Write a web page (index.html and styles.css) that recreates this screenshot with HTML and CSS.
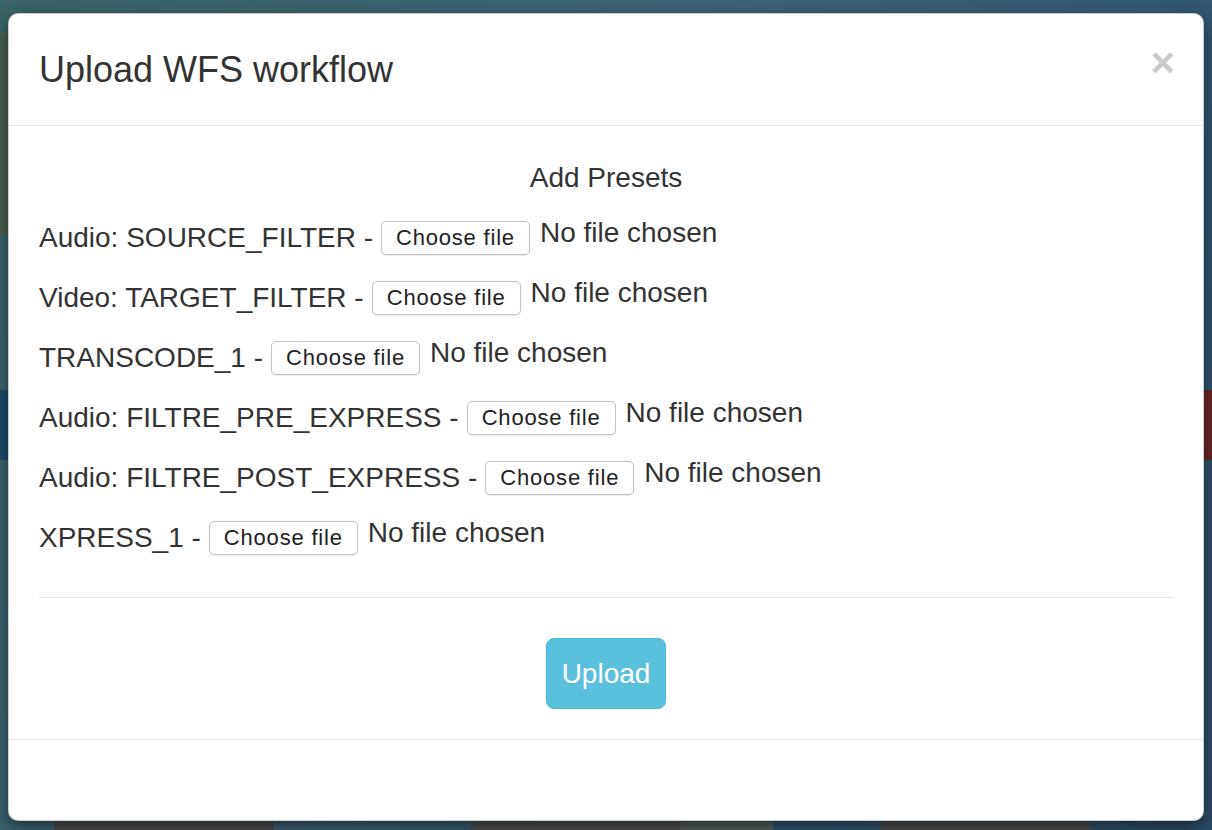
FILE: index.html
```html
<!DOCTYPE html>
<html lang="en">
<head>
<meta charset="utf-8">
<title>Upload WFS workflow</title>
<link rel="stylesheet" href="styles.css">
</head>
<body>
<div class="modal">
  <div class="modal-header">
    <h4 class="modal-title">Upload WFS workflow</h4>
    <button class="close" type="button" aria-label="Close">&times;</button>
  </div>
  <div class="modal-body">
    <div class="presets-title">Add Presets</div>
    <div class="preset-row">
      <span class="preset-label">Audio: SOURCE_FILTER -</span>
      <button class="file-btn" type="button">Choose file</button>
      <span class="file-status">No file chosen</span>
    </div>
    <div class="preset-row">
      <span class="preset-label">Video: TARGET_FILTER -</span>
      <button class="file-btn" type="button">Choose file</button>
      <span class="file-status">No file chosen</span>
    </div>
    <div class="preset-row">
      <span class="preset-label">TRANSCODE_1 -</span>
      <button class="file-btn" type="button">Choose file</button>
      <span class="file-status">No file chosen</span>
    </div>
    <div class="preset-row">
      <span class="preset-label">Audio: FILTRE_PRE_EXPRESS -</span>
      <button class="file-btn" type="button">Choose file</button>
      <span class="file-status">No file chosen</span>
    </div>
    <div class="preset-row">
      <span class="preset-label">Audio: FILTRE_POST_EXPRESS -</span>
      <button class="file-btn" type="button">Choose file</button>
      <span class="file-status">No file chosen</span>
    </div>
    <div class="preset-row">
      <span class="preset-label">XPRESS_1 -</span>
      <button class="file-btn" type="button">Choose file</button>
      <span class="file-status">No file chosen</span>
    </div>
    <hr class="divider">
    <div class="actions">
      <button class="btn-upload" type="button">Upload</button>
    </div>
  </div>
  <div class="modal-footer"></div>
</div>
</body>
</html>
```

FILE: styles.css
```css
html, body {
  margin: 0;
  padding: 0;
}

body {
  height: 830px;
  overflow: hidden;
  font-family: "Liberation Sans", Arial, sans-serif;
  color: #333;
  background:
    linear-gradient(to bottom, transparent 0 390px, #6a2626 390px 460px, transparent 460px) right top / 8px 100% no-repeat,
    linear-gradient(to bottom, transparent 0 33px, #4b5f52 33px 235px, transparent 235px 390px, #1d4b66 390px 460px, transparent 460px) left top / 8px 100% no-repeat,
    linear-gradient(to right, transparent 0 54px, #4d4d4d 54px 274px, transparent 274px 471px, #4f4f4f 471px 680px, #58615f 680px 773px, transparent 773px 881px, #4d4d4d 881px 1090px, transparent 1090px) left bottom / 100% 8px no-repeat,
    linear-gradient(120deg, #3a6467 0%, #3e6174 45%, #325670 75%, #2c4d66 100%);
}

.modal {
  margin: 13px 8px 0;
  background: #fff;
  border: 1px solid rgba(0, 0, 0, 0.2);
  border-radius: 10px;
  box-shadow: 0 6px 16px rgba(0, 0, 0, 0.5);
  overflow: hidden;
}

.modal-header {
  display: flex;
  justify-content: space-between;
  align-items: flex-start;
  padding: 30px 28px 30px 30px;
  border-bottom: 1px solid #e5e5e5;
}

.modal-title {
  margin: 0;
  font-size: 36px;
  line-height: 51px;
  font-weight: normal;
  color: #333;
}

.close {
  margin: 0;
  padding: 0;
  border: 0;
  background: transparent;
  font-family: "Liberation Sans", Arial, sans-serif;
  font-size: 42px;
  font-weight: bold;
  line-height: 38px;
  color: #000;
  opacity: 0.2;
  cursor: pointer;
}

.modal-body {
  padding: 32px 30px 30px;
  font-size: 28px;
  line-height: 40px;
}

.presets-title {
  text-align: center;
}

.preset-row {
  display: flex;
  align-items: center;
  margin-top: 20px;
  height: 40px;
}

.preset-label {
  white-space: nowrap;
}

.file-btn {
  margin-left: 8px;
  height: 34px;
  padding: 0 14px;
  border: 1px solid #c2c2c2;
  border-radius: 5px;
  background: #fff;
  box-shadow: 0 1px 1px rgba(0, 0, 0, 0.08);
  font-family: "Liberation Sans", Arial, sans-serif;
  font-size: 22px;
  letter-spacing: 0.8px;
  color: #222;
  line-height: 32px;
}

.file-status {
  margin-left: 10px;
  margin-bottom: 10px;
  white-space: nowrap;
}

.divider {
  margin: 39px 0 40px;
  border: 0;
  border-top: 1px solid #e5e5e5;
  height: 0;
}

.actions {
  display: flex;
  justify-content: center;
}

.btn-upload {
  padding: 14px 15px;
  border: 1px solid #46b8da;
  border-radius: 8px;
  background: #5bc0de;
  color: #fff;
  font-family: "Liberation Sans", Arial, sans-serif;
  font-size: 28px;
  line-height: 41px;
  cursor: pointer;
}

.modal-footer {
  height: 80px;
  border-top: 1px solid #e5e5e5;
}
```
